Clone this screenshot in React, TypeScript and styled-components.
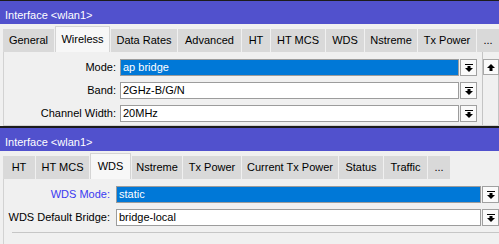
import styled, { createGlobalStyle } from "styled-components";

const GlobalStyle = createGlobalStyle`
  body {
    margin: 0;
    background: #f0f0f0;
    font-family: "Liberation Sans", Arial, sans-serif;
    font-size: 11px;
    color: #000;
  }
`;

type TabDef = { label: string; w: number; active?: boolean };

const TOP_TABS: TabDef[] = [
  { label: "General", w: 51 },
  { label: "Wireless", w: 55, active: true },
  { label: "Data Rates", w: 66 },
  { label: "Advanced", w: 63 },
  { label: "HT", w: 28 },
  { label: "HT MCS", w: 54 },
  { label: "WDS", w: 38 },
  { label: "Nstreme", w: 52 },
  { label: "Tx Power", w: 58 },
  { label: "...", w: 22 },
];

const BOTTOM_TABS: TabDef[] = [
  { label: "HT", w: 32 },
  { label: "HT MCS", w: 53 },
  { label: "WDS", w: 41, active: true },
  { label: "Nstreme", w: 50 },
  { label: "Tx Power", w: 58 },
  { label: "Current Tx Power", w: 96 },
  { label: "Status", w: 44 },
  { label: "Traffic", w: 43 },
  { label: "...", w: 22 },
];

const Window = styled.section<{ $h: number; $border: number }>`
  display: flex;
  flex-direction: column;
  height: ${(p) => p.$h}px;
  box-sizing: border-box;
  overflow: hidden;
  border-top: ${(p) => p.$border}px solid #1c1c1c;
  background: #f0f0f0;
`;

const TitleBar = styled.div`
  height: 23px;
  flex-shrink: 0;
  box-sizing: border-box;
  padding: 5px 0 0 5px;
  line-height: 18px;
  background: #5151cd;
  color: #fff;
  white-space: nowrap;
`;

const TabBar = styled.div`
  display: flex;
  align-items: flex-end;
  gap: 1px;
  flex-shrink: 0;
  height: 28px;
  box-sizing: border-box;
  padding: 2px 0 0 3px;
  white-space: nowrap;
`;

const Tab = styled.div<{ $active?: boolean; $w: number }>`
  flex-shrink: 0;
  width: ${(p) => p.$w}px;
  box-sizing: border-box;
  text-align: center;
  height: ${(p) => (p.$active ? 26 : 23)}px;
  line-height: ${(p) => (p.$active ? 24 : 23)}px;
  background: ${(p) => (p.$active ? "#f7f7f7" : "#d9d9d9")};
  border: ${(p) => (p.$active ? "1px solid #d4d4d4" : "none")};
  border-bottom: none;
`;

const Panel = styled.div<{ $bottomLine?: boolean }>`
  flex: 1;
  display: flex;
  margin-left: 3px;
  border-left: 1px solid #d2d2d2;
  border-bottom: ${(p) => (p.$bottomLine ? "1px solid #d2d2d2" : "none")};
`;

const Form = styled.div<{ $padRight: number }>`
  flex: 1;
  display: flex;
  flex-direction: column;
  gap: 6px;
  padding: 7px ${(p) => p.$padRight}px 0 0;
`;

const Row = styled.div<{ $labelW: number; $labelPad: number }>`
  display: grid;
  grid-template-columns: ${(p) => p.$labelW}px 1fr 17px;
  column-gap: 1px;
  height: 17px;

  & > label {
    padding-right: ${(p) => p.$labelPad}px;
  }
`;

const Label = styled.label<{ $accent?: boolean }>`
  text-align: right;
  line-height: 17px;
  white-space: nowrap;
  color: ${(p) => (p.$accent ? "#3a3af0" : "#000")};
`;

const Field = styled.div<{ $selected?: boolean }>`
  box-sizing: border-box;
  height: 17px;
  line-height: 15px;
  padding-left: 2px;
  border: 1px solid #9c9c9c;
  background: ${(p) => (p.$selected ? "#0078d7" : "#fff")};
  color: ${(p) => (p.$selected ? "#fff" : "#000")};
  white-space: nowrap;
  overflow: hidden;
`;

const DropButton = styled.div`
  display: flex;
  align-items: center;
  justify-content: center;
  box-sizing: border-box;
  width: 17px;
  height: 17px;
  border: 1px solid #a0a0a0;
  background: #fafafa;
`;

const Scrollbar = styled.div`
  width: 17px;
  display: flex;
  flex-direction: column;
  padding-top: 7px;
  box-sizing: border-box;
  border-left: 1px solid #c4c4c4;
`;

const ScrollButton = styled.div`
  display: flex;
  align-items: center;
  justify-content: center;
  width: 16px;
  height: 16px;
  box-sizing: border-box;
  border: 1px solid #a8a8a8;
  background: #fafafa;
`;

const ScrollTrack = styled.div`
  flex: 1;
  width: 16px;
  box-sizing: border-box;
  border-right: 1px solid #c4c4c4;
`;

const Separator = styled.div`
  height: 1px;
  margin: 0 0 0 8px;
  background: #c6c6c6;
`;

const DownIcon = () => (
  <svg width="8" height="8" viewBox="0 0 8 8">
    <rect x="0" y="0" width="8" height="1" fill="#000" />
    <rect x="2.5" y="2" width="3" height="2" fill="#000" />
    <polygon points="0,4 8,4 4,8" fill="#000" />
  </svg>
);

const UpIcon = () => (
  <svg width="8" height="7" viewBox="0 0 8 7">
    <polygon points="4,0 8,4 0,4" fill="#000" />
    <rect x="2.5" y="4" width="3" height="3" fill="#000" />
  </svg>
);

const Tabs = ({ tabs }: { tabs: TabDef[] }) => (
  <TabBar>
    {tabs.map((t, i) => (
      <Tab key={i} $w={t.w} $active={t.active}>
        {t.label}
      </Tab>
    ))}
  </TabBar>
);

const App = () => {
  return (
    <>
      <GlobalStyle />
      <Window $h={126} $border={1}>
        <TitleBar>Interface &lt;wlan1&gt;</TitleBar>
        <Tabs tabs={TOP_TABS} />
        <Panel $bottomLine>
          <Form $padRight={5}>
            {[
              ["Mode:", "ap bridge"],
              ["Band:", "2GHz-B/G/N"],
              ["Channel Width:", "20MHz"],
            ].map(([label, value], i) => (
              <Row key={i} $labelW={115} $labelPad={3}>
                <Label>{label}</Label>
                <Field $selected={i === 0}>{value}</Field>
                <DropButton>
                  <DownIcon />
                </DropButton>
              </Row>
            ))}
          </Form>
          <Scrollbar>
            <ScrollButton>
              <UpIcon />
            </ScrollButton>
            <ScrollTrack />
          </Scrollbar>
        </Panel>
      </Window>
      <Window $h={118} $border={2}>
        <TitleBar>Interface &lt;wlan1&gt;</TitleBar>
        <Tabs tabs={BOTTOM_TABS} />
        <Panel>
          <Form $padRight={0}>
            <Row $labelW={111} $labelPad={5}>
              <Label $accent>WDS Mode:</Label>
              <Field $selected>static</Field>
              <DropButton>
                <DownIcon />
              </DropButton>
            </Row>
            <Row $labelW={111} $labelPad={5}>
              <Label>WDS Default Bridge:</Label>
              <Field>bridge-local</Field>
              <DropButton>
                <DownIcon />
              </DropButton>
            </Row>
            <Separator />
          </Form>
        </Panel>
      </Window>
    </>
  );
};

export default App;
